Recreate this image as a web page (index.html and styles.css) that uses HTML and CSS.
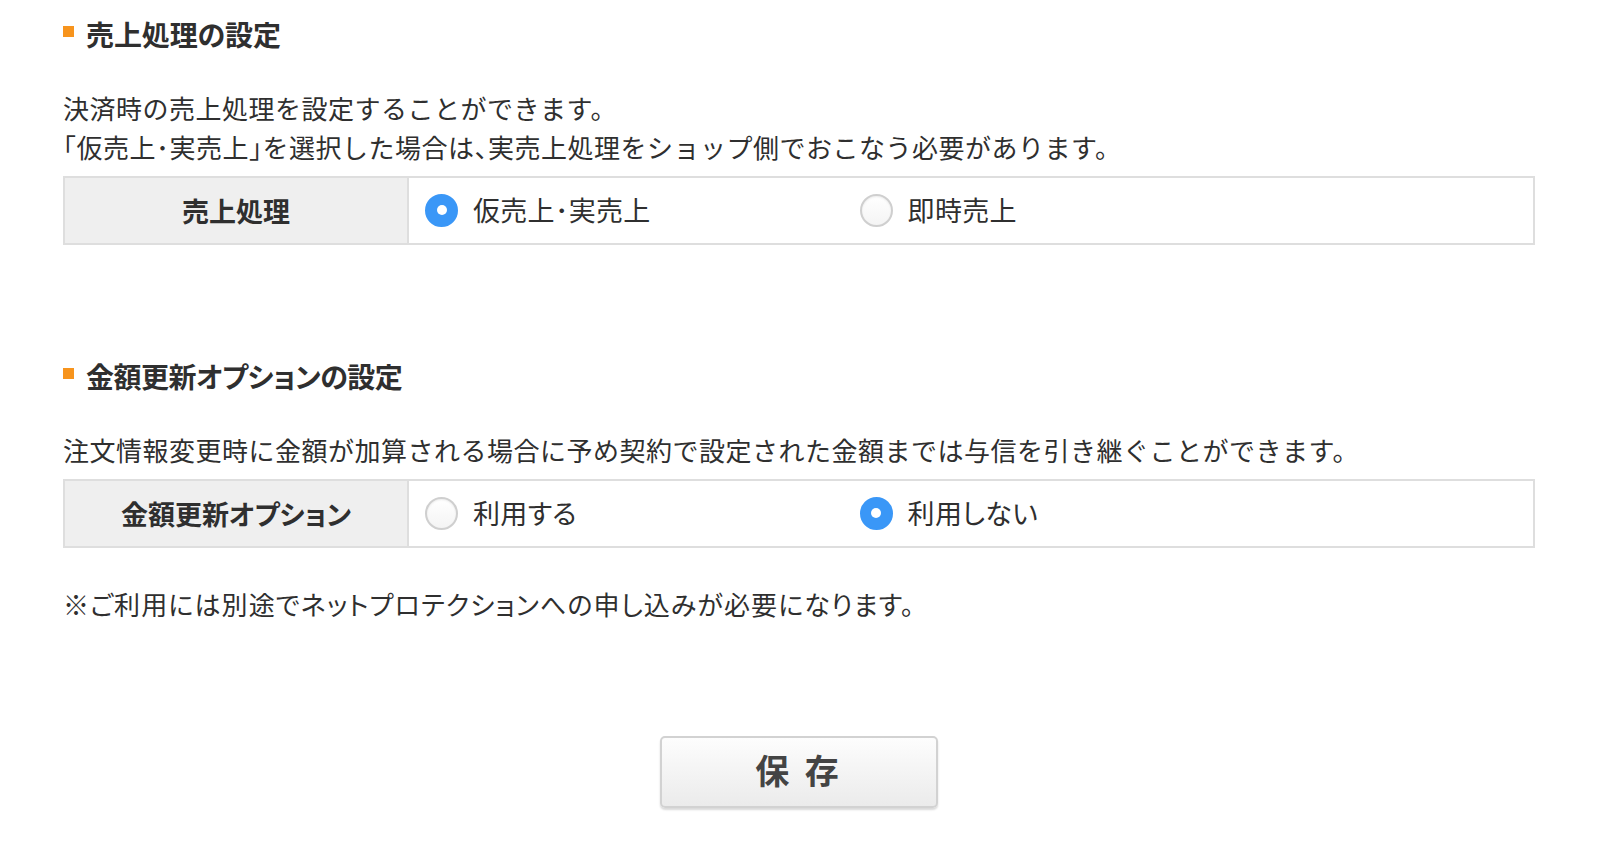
FILE: index.html
```html
<!DOCTYPE html>
<html lang="ja">
<head>
    <meta charset="UTF-8">
    <meta name="viewport" content="width=device-width, initial-scale=1.0">
    <title>売上処理の設定</title>
    <link rel="stylesheet" href="styles.css">
</head>
<body>
    <div class="wrap">
        <h2 class="title">売上処理の設定</h2>
        <p class="desc">決済時の売上処理を設定することができます。<br><span class="half">「</span>仮売上<span class="half">･</span>実売上<span class="half">」</span>を選択した場合は<span class="half">、</span>実売上処理をショップ側でおこなう必要があります。</p>
        <table class="setting">
            <tr>
                <th>売上処理</th>
                <td>
                    <label class="opt"><input type="radio" name="sales" checked><span>仮売上･実売上</span></label>
                    <label class="opt"><input type="radio" name="sales"><span>即時売上</span></label>
                </td>
            </tr>
        </table>

        <h2 class="title second">金額更新オプションの設定</h2>
        <p class="desc">注文情報変更時に金額が加算される場合に予め契約で設定された金額までは与信を引き継ぐことができます。</p>
        <table class="setting">
            <tr>
                <th>金額更新オプション</th>
                <td>
                    <label class="opt"><input type="radio" name="amount"><span>利用する</span></label>
                    <label class="opt"><input type="radio" name="amount" checked><span>利用しない</span></label>
                </td>
            </tr>
        </table>
        <p class="note">※ご利用には別途でネットプロテクションへの申し込みが必要になります。</p>

        <div class="actions">
            <button class="save" type="button">保 存</button>
        </div>
    </div>
</body>
</html>
```

FILE: styles.css
```css
body {
    margin: 0;
    background: #fff;
    color: #2f2f2f;
    font-family: "Noto Sans CJK JP", "Noto Sans", sans-serif;
}
.wrap {
    padding: 14px 65px 40px 63px;
}
.title {
    display: flex;
    align-items: center;
    margin: 0;
    font-size: 28px;
    line-height: 40px;
    font-weight: bold;
    font-feature-settings: "palt";
    letter-spacing: -0.1px;
}
.title::before {
    content: "";
    width: 11px;
    height: 11px;
    background: #f7941d;
    margin: 0 12px 6px 0;
}
.title.second {
    margin-top: 111px;
    letter-spacing: -0.5px;
}
.desc {
    margin: 34px 0 10px;
    font-size: 26px;
    line-height: 39px;
    letter-spacing: 0.5px;
}
.half {
    font-feature-settings: "halt";
}
.setting {
    width: 1472px;
    border-collapse: collapse;
    border: 2px solid #dedede;
}
.setting th {
    width: 342px;
    height: 65px;
    padding: 0;
    background: #efefef;
    border: 2px solid #dedede;
    font-size: 27px;
    font-weight: bold;
    font-feature-settings: "palt";
    text-align: center;
}
.setting td {
    padding: 0 0 0 16px;
    border: 2px solid #dedede;
}
.opt {
    display: inline-flex;
    align-items: center;
    width: 431px;
    font-size: 27px;
    font-feature-settings: "palt";
    letter-spacing: 0.3px;
}
.opt input {
    appearance: none;
    -webkit-appearance: none;
    width: 33px;
    height: 33px;
    margin: 2px 15px 0 0;
    border-radius: 50%;
    border: 2px solid #cfcfcf;
    background: linear-gradient(#fff, #f4f4f4);
    box-shadow: inset 0 1px 2px rgba(0, 0, 0, 0.08);
    position: relative;
}
.opt input:checked {
    border-color: #3a97f7;
    background: #3a97f7;
    box-shadow: none;
}
.opt input:checked::after {
    content: "";
    position: absolute;
    left: 50%;
    top: 50%;
    width: 10px;
    height: 10px;
    margin: -5px 0 0 -5px;
    border-radius: 50%;
    background: #fff;
}
.note {
    margin: 36px 0 0;
    font-size: 26px;
    line-height: 39px;
    font-feature-settings: "palt";
    letter-spacing: 1.1px;
}
.actions {
    display: flex;
    padding-left: 597px;
    margin-top: 113px;
}
.save {
    width: 278px;
    height: 72px;
    padding: 0 0 5px;
    border: 2px solid #d2d2d2;
    border-radius: 5px;
    background: linear-gradient(#fdfdfd, #ebebeb);
    box-shadow: 0 2px 2px rgba(0, 0, 0, 0.15);
    color: #444;
    font-family: "Noto Sans CJK JP", sans-serif;
    font-size: 34px;
    font-weight: bold;
    letter-spacing: 4px;
}
```
